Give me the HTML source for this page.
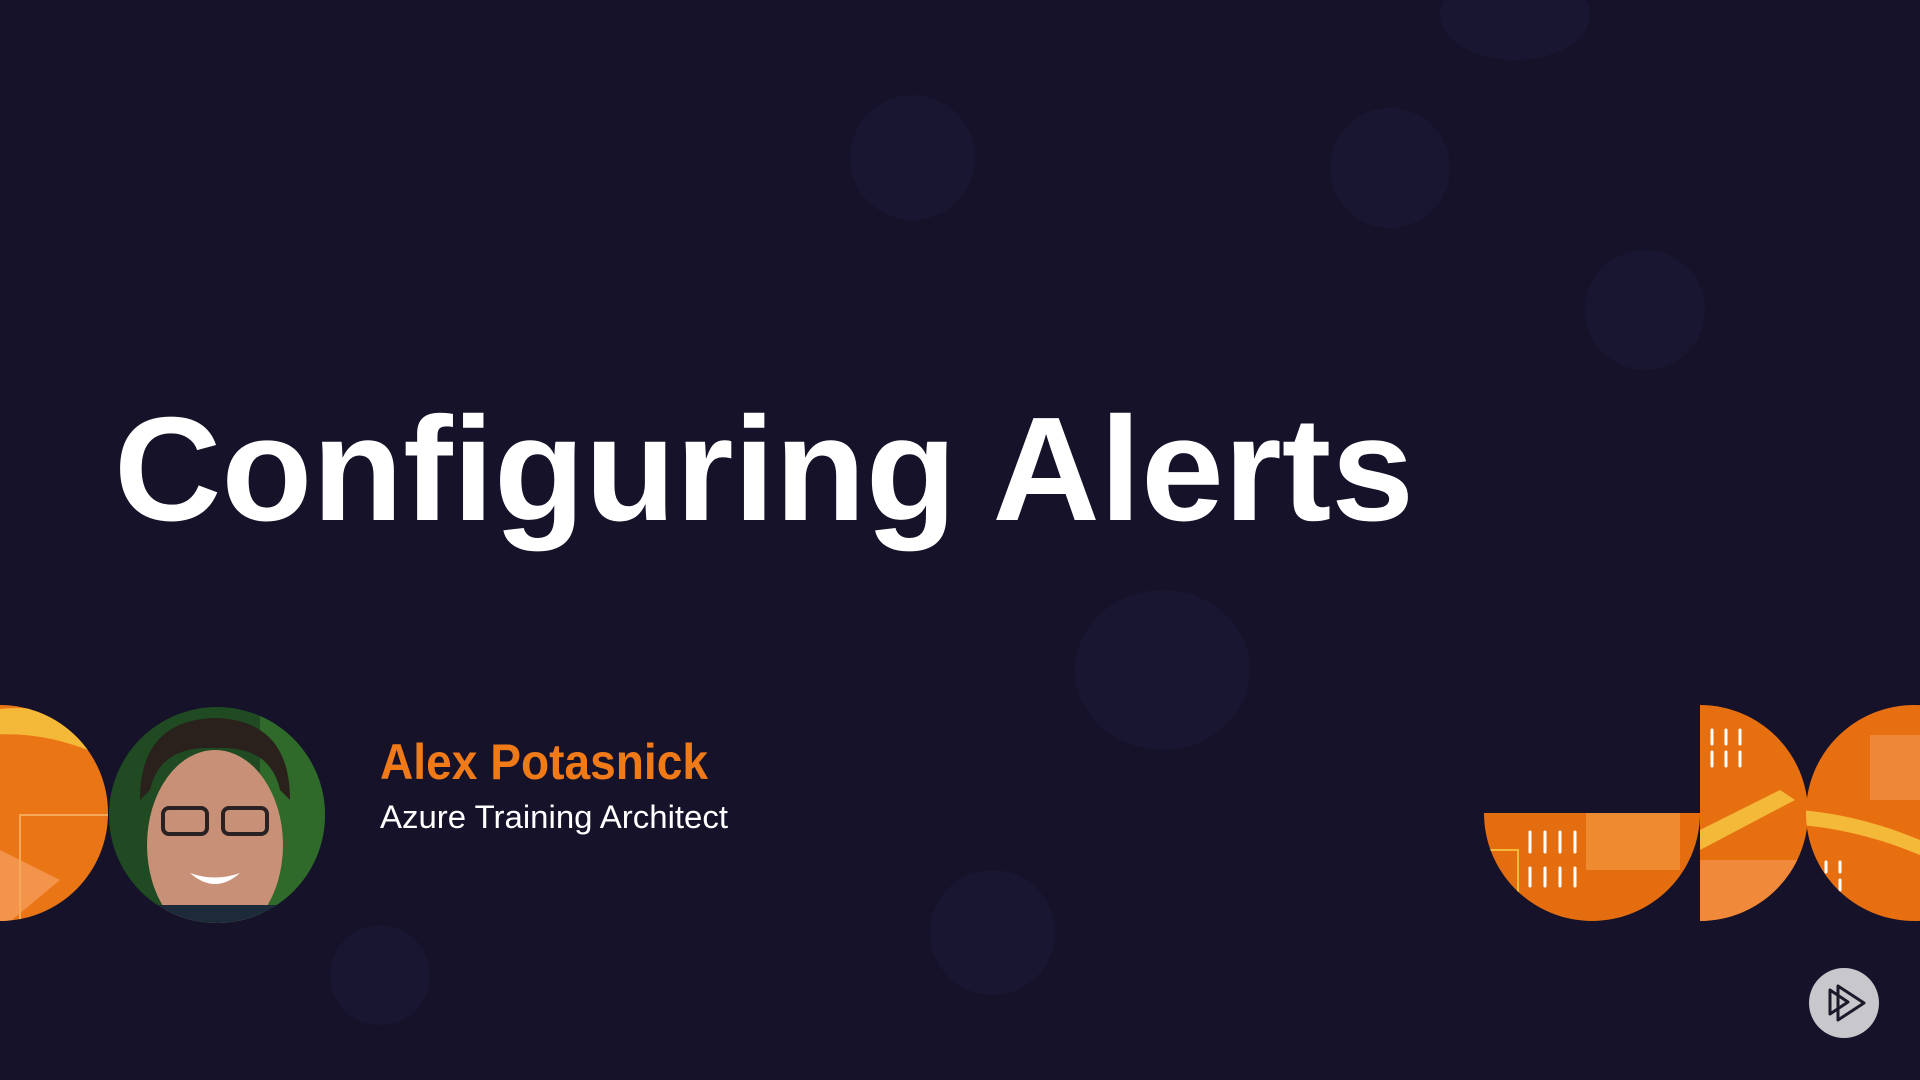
<!DOCTYPE html>
<html><head><meta charset="utf-8"><style>
html,body{margin:0;padding:0;width:1920px;height:1080px;overflow:hidden;background:#15122a;}
body{position:relative;font-family:"Liberation Sans",sans-serif;}
.a{position:absolute}
.fc{position:absolute;border-radius:50%;background:#191631;}
</style></head><body>
<div class="fc" style="left:1440px;top:-30px;width:150px;height:90px"></div>
<div class="fc" style="left:850px;top:95px;width:125px;height:125px"></div>
<div class="fc" style="left:1330px;top:108px;width:120px;height:120px"></div>
<div class="fc" style="left:1585px;top:250px;width:120px;height:120px"></div>
<div class="fc" style="left:1075px;top:590px;width:175px;height:160px"></div>
<div class="fc" style="left:930px;top:870px;width:125px;height:125px"></div>
<div class="fc" style="left:330px;top:925px;width:100px;height:100px"></div>

<svg class="a" style="left:0;top:0" width="1920" height="1080">
<text x="114" y="520" fill="#fff" font-family="Liberation Sans" font-weight="bold" font-size="148" textLength="1300" lengthAdjust="spacingAndGlyphs">Configuring Alerts</text>
<text x="380" y="779" fill="#f07a17" font-family="Liberation Sans" font-weight="bold" font-size="50" textLength="328" lengthAdjust="spacingAndGlyphs">Alex Potasnick</text>
<text x="380" y="828" fill="#fff" font-family="Liberation Sans" font-size="32" textLength="348" lengthAdjust="spacingAndGlyphs">Azure Training Architect</text>

<defs>
<clipPath id="c1"><circle cx="0" cy="813" r="108"/></clipPath>
<clipPath id="c2"><path d="M1484 813 A108 108 0 0 0 1700 813 Z"/></clipPath>
<clipPath id="c3"><path d="M1700 705 A108 108 0 0 1 1700 921 Z"/></clipPath>
<clipPath id="c4"><circle cx="1914" cy="813" r="108"/></clipPath>
<clipPath id="ph"><circle cx="217" cy="815" r="108"/></clipPath>
</defs>
<g clip-path="url(#c1)">
<rect x="-110" y="700" width="220" height="230" fill="#ea7514"/>
<path d="M-10 710 Q60 700 110 740 L110 760 Q50 730 -10 735Z" fill="#f5b93a"/>
<path d="M0 850 L60 880 L0 930Z" fill="#f3944a"/>
<rect x="20" y="815" width="90" height="110" fill="none" stroke="#f4a858" stroke-width="2"/>
</g>
<g clip-path="url(#c2)">
<rect x="1480" y="813" width="225" height="110" fill="#e46d10"/>
<path d="M1586 813 L1680 813 L1680 870 L1586 870Z" fill="#ee8a30"/>
<path d="M1490 850 L1518 850 L1518 925" fill="none" stroke="#f5b93a" stroke-width="2"/>
<g stroke="#fff" stroke-width="3" stroke-linecap="round">
<path d="M1530 832v20M1545 832v20M1560 832v20M1575 832v20M1530 868v18M1545 868v18M1560 868v18M1575 868v18"/></g>
</g>
<g clip-path="url(#c3)">
<rect x="1700" y="700" width="110" height="225" fill="#e66f10"/>
<path d="M1700 860 L1810 860 L1770 925 L1700 925Z" fill="#f08a3a"/>
<path d="M1700 830 L1780 790 L1795 800 L1700 850Z" fill="#f5b93a"/>
<g stroke="#fff" stroke-width="3" stroke-linecap="round">
<path d="M1712 730v14M1726 730v14M1740 730v14M1712 752v14M1726 752v14M1740 752v14"/></g>
</g>
<g clip-path="url(#c4)">
<rect x="1800" y="700" width="120" height="225" fill="#e86f10"/>
<path d="M1870 735 L1920 735 L1920 800 L1870 800Z" fill="#ee8838"/>
<path d="M1800 810 Q1860 815 1920 840 L1920 855 Q1860 830 1800 825Z" fill="#f5b93a"/>
<g stroke="#fff" stroke-width="3" stroke-linecap="round"><path d="M1826 862v10M1840 862v10M1826 880v10M1840 880v10"/></g>
</g>
<g clip-path="url(#ph)">
<rect x="100" y="700" width="240" height="240" fill="#1f4a22"/>
<rect x="260" y="700" width="80" height="240" fill="#2f6a2a"/>
<ellipse cx="215" cy="845" rx="68" ry="95" fill="#c99078"/>
<path d="M140 800 Q140 720 215 718 Q290 720 290 800 L280 790 Q270 745 215 748 Q160 745 150 790Z" fill="#2a201c"/>
<rect x="163" y="808" width="44" height="26" rx="6" fill="none" stroke="#2a2222" stroke-width="4"/>
<rect x="223" y="808" width="44" height="26" rx="6" fill="none" stroke="#2a2222" stroke-width="4"/>
<path d="M190 873 Q215 895 240 873 Q215 882 190 873Z" fill="#fff"/>
<rect x="150" y="905" width="140" height="40" fill="#1d2a3a"/>
</g>
<circle cx="1844" cy="1003" r="35" fill="#c8c8cc"/>
<path d="M1830 990 L1830 1014 L1848 1002Z M1838 986 L1838 1020 L1864 1003Z" fill="none" stroke="#1c1a2a" stroke-width="3" stroke-linejoin="round"/>
</svg>
</body></html>
